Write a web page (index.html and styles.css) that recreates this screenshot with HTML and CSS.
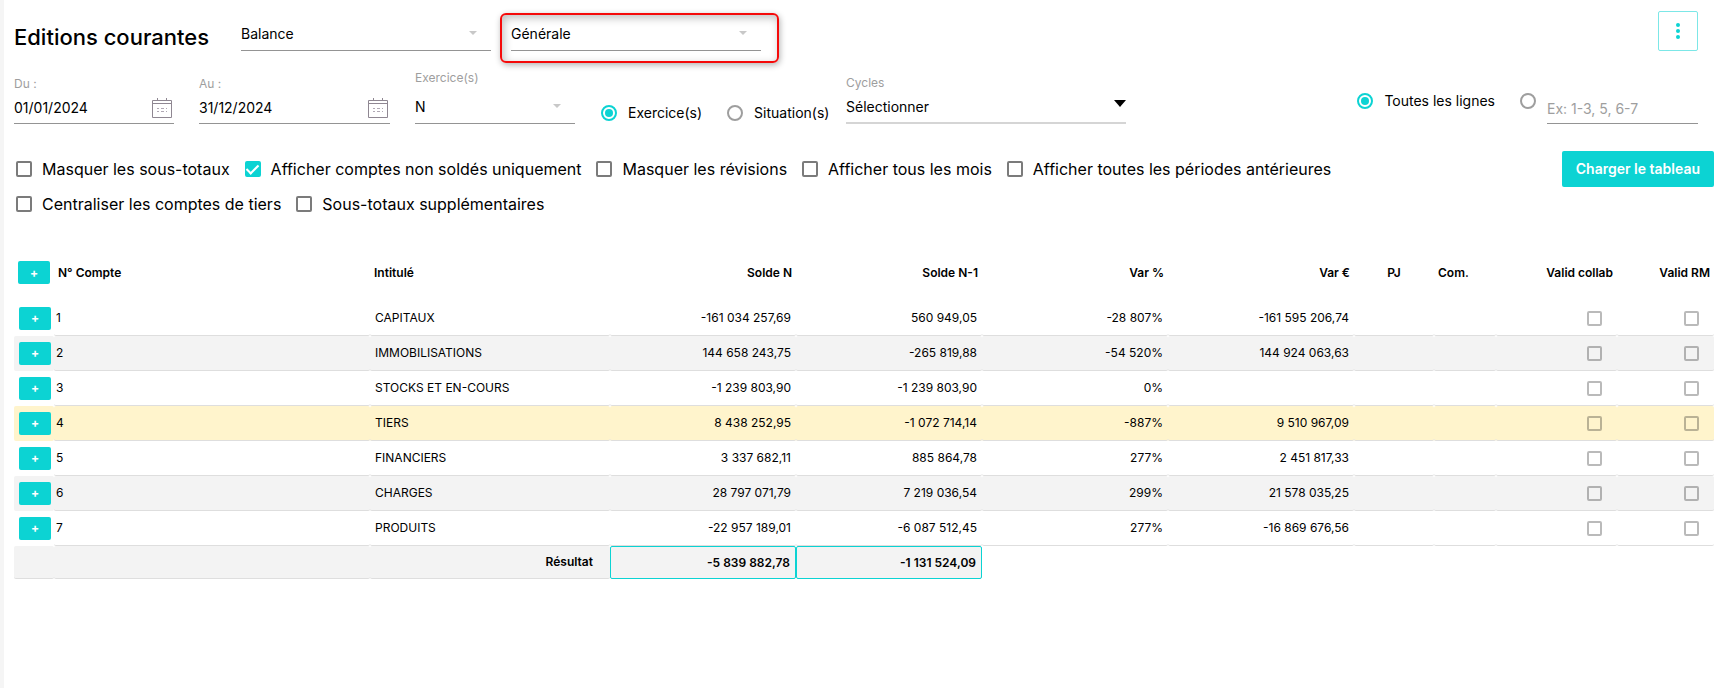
FILE: index.html
```html
<!DOCTYPE html>
<html lang="fr">
<head>
<meta charset="utf-8">
<meta name="viewport" content="width=device-width, initial-scale=1">
<title>Editions courantes</title>
<link rel="stylesheet" href="styles.css">
</head>
<body>
<main class="page">
  <header class="topbar">
    <h1 class="title">Editions courantes</h1>
    <div class="select wide">
      <select aria-label="Edition"><option>Balance</option></select>
    </div>
    <div class="highlight">
      <div class="select wide">
        <select aria-label="Type de balance"><option>Générale</option></select>
      </div>
    </div>
    <button class="more" type="button" aria-label="Plus d'options">
      <svg width="6" height="18" viewBox="0 0 6 18"><circle cx="3" cy="3" r="2"/><circle cx="3" cy="9" r="2"/><circle cx="3" cy="15" r="2"/></svg>
    </button>
  </header>

  <form class="filters">
    <div class="field date">
      <label for="du">Du :</label>
      <div class="control">
        <input id="du" type="text" value="01/01/2024">
        <svg class="calendar" width="20" height="20" viewBox="0 0 20 20"><path d="M.5 2.500h19v17H.5zM.5 5.500h19M5.500 0v3M14.500 0v3"/><path class="days" d="M5 10.500h2M9 10.500h3M14 10.500h1M5 13.500h2M9 13.500h3M14 13.500h1"/></svg>
      </div>
    </div>
    <div class="field date end">
      <label for="au">Au :</label>
      <div class="control">
        <input id="au" type="text" value="31/12/2024">
        <svg class="calendar" width="20" height="20" viewBox="0 0 20 20"><path d="M.5 2.500h19v17H.5zM.5 5.500h19M5.500 0v3M14.500 0v3"/><path class="days" d="M5 10.500h2M9 10.500h3M14 10.500h1M5 13.500h2M9 13.500h3M14 13.500h1"/></svg>
      </div>
    </div>
    <div class="field exercice">
      <label for="exercice">Exercice(s)</label>
      <div class="select"><select id="exercice"><option>N</option></select></div>
    </div>
    <div class="radios period">
      <label class="radio"><input type="radio" name="periode" checked>Exercice(s)</label>
      <label class="radio"><input type="radio" name="periode">Situation(s)</label>
    </div>
    <div class="field cycles">
      <label for="cycles">Cycles</label>
      <div class="select dark"><select id="cycles"><option>Sélectionner</option></select></div>
    </div>
    <div class="radios lines">
      <label class="radio"><input type="radio" name="lignes" checked>Toutes les lignes</label>
      <label class="radio"><input type="radio" name="lignes" aria-label="Lignes choisies"></label>
    </div>
    <input class="range" type="text" placeholder="Ex: 1-3, 5, 6-7" aria-label="Lignes">
  </form>

  <section class="options">
    <div class="checks">
      <label class="check"><input type="checkbox">Masquer les sous-totaux</label>
      <label class="check"><input type="checkbox" checked>Afficher comptes non soldés uniquement</label>
      <label class="check"><input type="checkbox">Masquer les révisions</label>
      <label class="check"><input type="checkbox">Afficher tous les mois</label>
      <label class="check"><input type="checkbox">Afficher toutes les périodes antérieures</label>
      <label class="check"><input type="checkbox">Centraliser les comptes de tiers</label>
      <label class="check"><input type="checkbox">Sous-totaux supplémentaires</label>
    </div>
    <button class="load" type="button">Charger le tableau</button>
  </section>

  <table class="balance">
    <colgroup>
      <col class="c-plus"><col class="c-compte"><col class="c-intitule">
      <col class="c-num"><col class="c-num"><col class="c-num"><col class="c-num">
      <col class="c-pj"><col class="c-com"><col class="c-collab"><col class="c-rm">
    </colgroup>
    <thead>
      <tr>
        <th><button class="plus" type="button" aria-label="Tout déplier"></button></th>
        <th>N° Compte</th><th>Intitulé</th>
        <th class="num">Solde N</th><th class="num">Solde N-1</th><th class="num">Var %</th><th class="num">Var €</th>
        <th class="mid">PJ</th><th>Com.</th><th class="num">Valid collab</th><th class="num">Valid RM</th>
      </tr>
    </thead>
    <tbody>
      <tr><td><button class="plus" type="button" aria-label="Déplier"></button></td><td class="compte">1</td><td>CAPITAUX</td><td class="num">-161 034 257,69</td><td class="num">560 949,05</td><td class="num">-28 807%</td><td class="num">-161 595 206,74</td><td></td><td></td><td class="valid"><input type="checkbox" aria-label="Valid collab"></td><td class="valid"><input type="checkbox" aria-label="Valid RM"></td></tr>
      <tr><td><button class="plus" type="button" aria-label="Déplier"></button></td><td class="compte">2</td><td>IMMOBILISATIONS</td><td class="num">144 658 243,75</td><td class="num">-265 819,88</td><td class="num">-54 520%</td><td class="num">144 924 063,63</td><td></td><td></td><td class="valid"><input type="checkbox" aria-label="Valid collab"></td><td class="valid"><input type="checkbox" aria-label="Valid RM"></td></tr>
      <tr><td><button class="plus" type="button" aria-label="Déplier"></button></td><td class="compte">3</td><td>STOCKS ET EN-COURS</td><td class="num">-1 239 803,90</td><td class="num">-1 239 803,90</td><td class="num">0%</td><td class="num"></td><td></td><td></td><td class="valid"><input type="checkbox" aria-label="Valid collab"></td><td class="valid"><input type="checkbox" aria-label="Valid RM"></td></tr>
      <tr class="active"><td><button class="plus" type="button" aria-label="Déplier"></button></td><td class="compte">4</td><td>TIERS</td><td class="num">8 438 252,95</td><td class="num">-1 072 714,14</td><td class="num">-887%</td><td class="num">9 510 967,09</td><td></td><td></td><td class="valid"><input type="checkbox" aria-label="Valid collab"></td><td class="valid"><input type="checkbox" aria-label="Valid RM"></td></tr>
      <tr><td><button class="plus" type="button" aria-label="Déplier"></button></td><td class="compte">5</td><td>FINANCIERS</td><td class="num">3 337 682,11</td><td class="num">885 864,78</td><td class="num">277%</td><td class="num">2 451 817,33</td><td></td><td></td><td class="valid"><input type="checkbox" aria-label="Valid collab"></td><td class="valid"><input type="checkbox" aria-label="Valid RM"></td></tr>
      <tr><td><button class="plus" type="button" aria-label="Déplier"></button></td><td class="compte">6</td><td>CHARGES</td><td class="num">28 797 071,79</td><td class="num">7 219 036,54</td><td class="num">299%</td><td class="num">21 578 035,25</td><td></td><td></td><td class="valid"><input type="checkbox" aria-label="Valid collab"></td><td class="valid"><input type="checkbox" aria-label="Valid RM"></td></tr>
      <tr><td><button class="plus" type="button" aria-label="Déplier"></button></td><td class="compte">7</td><td>PRODUITS</td><td class="num">-22 957 189,01</td><td class="num">-6 087 512,45</td><td class="num">277%</td><td class="num">-16 869 676,56</td><td></td><td></td><td class="valid"><input type="checkbox" aria-label="Valid collab"></td><td class="valid"><input type="checkbox" aria-label="Valid RM"></td></tr>
    </tbody>
    <tfoot>
      <tr><td></td><td></td><td class="result">Résultat</td><td class="num total">-5 839 882,78</td><td class="num total">-1 131 524,09</td></tr>
    </tfoot>
  </table>
</main>
</body>
</html>
```

FILE: styles.css
```css
:root {
  --accent: #0cd3d3;
  --line: #949494;
  --muted: #9e9e9e;
}

* { box-sizing: border-box; }

body {
  margin: 0;
  background: #fff;
  color: #000;
  font: 14px/20px Inter, "Liberation Sans", sans-serif;
}

input, select, button {
  margin: 0;
  padding: 0;
  border: 0;
  border-radius: 0;
  background: transparent;
  color: inherit;
  font: inherit;
}

.page {
  min-height: 100vh;
  padding: 11px 9px 0 10px;
  border-left: 4px solid #f5f5f5;
}

/* Title bar */
.topbar {
  display: flex;
  align-items: flex-start;
  padding-right: 16px;
}

.title {
  min-width: 227px;
  margin: 0;
  font-size: 22px;
  font-weight: 500;
  line-height: 52px;
  white-space: nowrap;
}

.select {
  position: relative;
  border-bottom: 1px solid var(--line);
}

.select select {
  display: block;
  width: 100%;
  height: 33px;
  appearance: none;
}

.select::after {
  content: "";
  position: absolute;
  top: 14px;
  right: 14px;
  border: solid transparent;
  border-width: 4px 4px 0;
  border-top-color: #c8c8c8;
  pointer-events: none;
}

.wide { width: 250px; }
.topbar > .wide { margin-top: 6px; }

.highlight {
  margin: 2px 0 0 9px;
  padding: 2px 16px 10px 9px;
  border: 2px solid #f50a0a;
  border-radius: 6px;
  box-shadow: 1px 2px 6px rgba(0, 0, 0, .3), inset 2px 3px 8px rgba(0, 0, 0, .25);
}

.more {
  display: flex;
  align-items: center;
  justify-content: center;
  width: 40px;
  height: 40px;
  margin-left: auto;
  border: 1px solid #7ce7e7;
  border-radius: 2px;
  fill: var(--accent);
}

/* Filters */
.filters {
  display: flex;
  align-items: flex-end;
  padding: 8px 16px 0 0;
}

.field > label {
  display: block;
  color: var(--muted);
  font-size: 12px;
  line-height: 18px;
}

.date { width: 160px; }
.date.end { width: 191px; margin-left: 25px; }

.control {
  display: flex;
  align-items: center;
  justify-content: space-between;
  height: 31px;
  padding-right: 2px;
  border-bottom: 1px solid var(--line);
}

.control input { width: 110px; }

.calendar {
  fill: none;
  stroke: #8f8792;
}

.calendar .days { stroke: #b0a8b4; }

.exercice { width: 160px; margin-left: 25px; }
.exercice > label { padding-bottom: 5px; line-height: 14px; }

.radios {
  display: flex;
  align-items: center;
}

.radio {
  display: flex;
  align-items: center;
  gap: 11px;
}

.radio input {
  display: grid;
  place-items: center;
  width: 16px;
  height: 16px;
  border: 2px solid var(--muted);
  border-radius: 50%;
  appearance: none;
}

.radio input:checked { border-color: var(--accent); }

.radio input:checked::before {
  content: "";
  width: 8px;
  height: 8px;
  border-radius: 50%;
  background: var(--accent);
}

.period {
  gap: 25px;
  width: 245px;
  margin: 0 0 1px 26px;
}

.cycles { width: 280px; }

.dark { border-bottom: 2px solid #d5d5d5; }
.dark select { height: 30px; }

.dark::after {
  top: 8px;
  right: 0;
  border-width: 7px 6px 0;
  border-top-color: #000;
}

.lines {
  gap: 25px;
  margin: 0 11px 13px auto;
}

.range {
  width: 151px;
  height: 31px;
  border-bottom: 1px solid var(--line);
}

.range::placeholder { color: var(--muted); opacity: 1; }

/* Display options */
.options {
  display: flex;
  align-items: flex-start;
  justify-content: space-between;
  gap: 32px;
  padding-top: 27px;
}

.checks {
  display: flex;
  flex-wrap: wrap;
  gap: 11px 15px;
  padding: 6px 0 0 2px;
}

.check {
  display: flex;
  align-items: center;
  gap: 10px;
  font-size: 16px;
  line-height: 24px;
}

.check input, .valid input {
  display: grid;
  place-items: center;
  flex: none;
  width: 16px;
  height: 16px;
  border: 2px solid #7b7b7b;
  border-radius: 2px;
  appearance: none;
}

.check input:checked {
  border-color: var(--accent);
  background: var(--accent);
}

.check input:checked::before {
  content: "";
  width: 5px;
  height: 10px;
  margin-top: -2px;
  border: solid #fff;
  border-width: 0 2px 2px 0;
  transform: rotate(45deg);
}

.load {
  flex: none;
  height: 36px;
  padding: 0 14px;
  border-radius: 2px;
  background: var(--accent);
  color: #fff;
  font-weight: 600;
}

/* Balance table */
.balance {
  width: 100%;
  margin-top: 28px;
  border-spacing: 0;
  table-layout: fixed;
  font-size: 12px;
  line-height: 16px;
}

.c-plus { width: 40px; }
.c-compte { width: 316px; }
.c-intitule { width: 240px; }
.c-num { width: 186px; }
.c-pj { width: 80px; }
.c-com { width: 62px; }
.c-collab { width: 121px; }
.c-rm { width: 97px; }

th {
  height: 57px;
  padding: 0 4px;
  font-weight: 600;
  text-align: left;
  white-space: nowrap;
}

td {
  height: 35px;
  padding: 0 5px;
  border-bottom: 1px solid #dedede;
  border-radius: 2px;
}

tbody td:first-child { border-bottom-color: transparent; }
tbody tr:nth-child(even) { background: #f3f3f3; }
tbody tr.active { background: #fff4cc; }

.compte { padding-left: 2px; }
.num { text-align: right; }
.mid { text-align: center; }

.plus {
  display: grid;
  place-items: center;
  width: 32px;
  height: 23px;
  border-radius: 2px;
  background: var(--accent);
}

.plus::before {
  content: "+";
  color: #fff;
  font-size: 12px;
  font-weight: 700;
  line-height: 16px;
}

.valid input {
  width: 15px;
  height: 15px;
  margin-left: auto;
  border-color: rgba(0, 0, 0, .27);
}

.valid { padding-right: 15px; }

tfoot td {
  height: 33px;
  background: #f3f3f3;
  font-weight: 600;
}

.result { padding-right: 17px; text-align: right; }
.total { border: 1px solid var(--accent); }
```
